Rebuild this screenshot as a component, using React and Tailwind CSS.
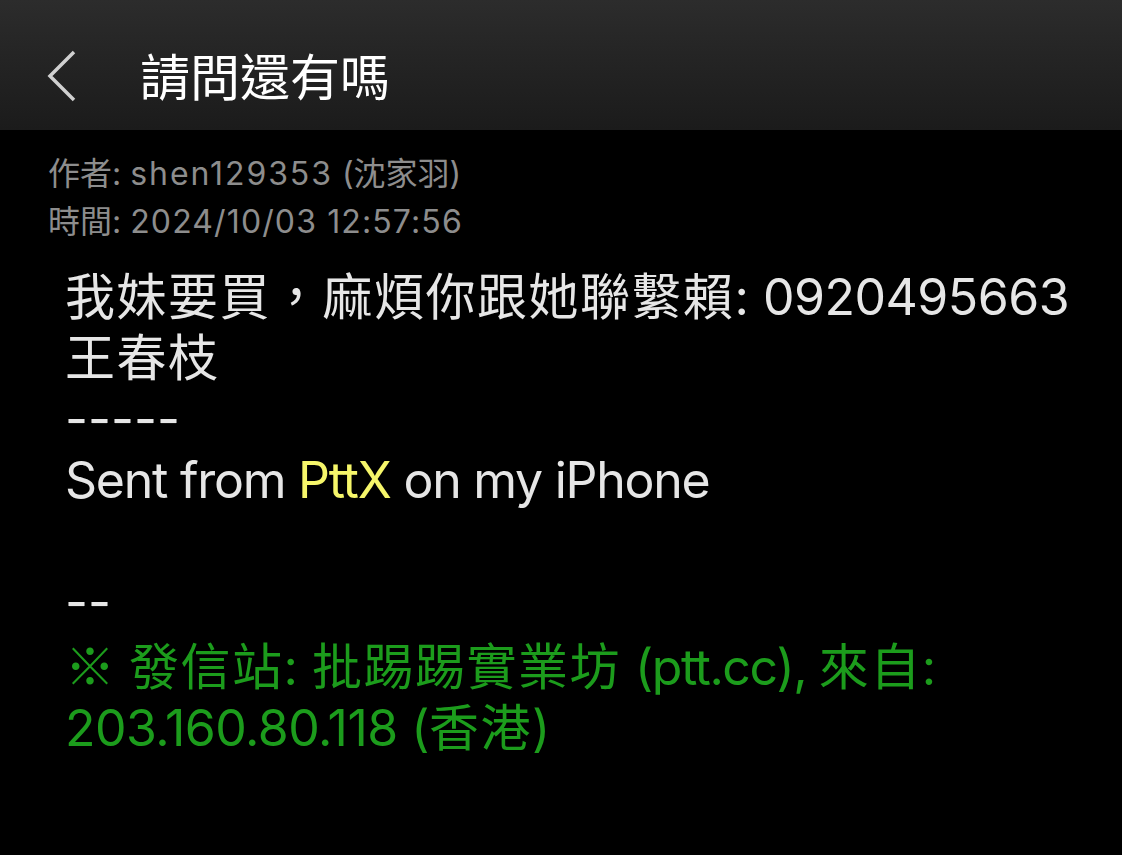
const font = { fontFamily: 'Inter, "Noto Sans CJK TC", sans-serif' };
const cjk = { fontFamily: '"Noto Sans CJK TC", sans-serif' };

function BackIcon() {
    return (
        <svg width="36" height="56" viewBox="0 0 36 56" className="shrink-0">
            <path d="M30 4 L6 28 L30 52" fill="none" stroke="#d0d0d0" strokeWidth="3.5" />
        </svg>
    );
}

// CJK runs are set a touch wider than the Latin ones, as in the app
const C = ({ children }) => <span className="tracking-[1.5px]">{children}</span>;

export default function App() {
    return (
        <div className="w-[1122px] h-[855px] bg-black overflow-hidden" style={font}>
            {/* Header */}
            <header className="h-[130px] flex items-center pl-[44px] pt-[22px] bg-gradient-to-b from-[#2c2c2c] to-[#1b1b1b]">
                <BackIcon />
                <h1 className="ml-[60px] text-[50px] leading-none text-white font-normal pt-1">請問還有嗎</h1>
            </header>

            {/* Meta */}
            <div className="pl-[48px] pt-[20px] text-[32px] leading-[48px] text-[#8d8d8d]">
                <p>
                    作者: <span className="tracking-[0.06em]">shen129353</span> (沈家羽)
                </p>
                <p>
                    時間: <span className="tracking-[0.035em]">2024/10/03 12:57:56</span>
                </p>
            </div>

            {/* Body */}
            <div className="pl-[65px] pt-[21px] text-[50px] leading-[61px] text-[#e6e6e6]">
                <p>
                    <C>我妹要買，麻煩你跟她聯繫賴</C>: <span className="tracking-[-0.01em]">0920495663</span>
                </p>
                <p>
                    <C>王春枝</C>
                </p>
                <p>-----</p>
                <p className="tracking-[-0.025em]">
                    Sent from <span className="text-[#f6f66a]">PttX</span> on my iPhone
                </p>
                <p>&nbsp;</p>
                <p>--</p>
                <div className="text-[#1c9c1c]">
                    <p>
                        <span style={cjk}>※</span> <C>發信站</C>: <C>批踢踢實業坊</C>{' '}
                        <span className="tracking-[-0.03em]">(ptt.cc), </span>
                        <C>來自</C>:
                    </p>
                    <p>
                        <span className="tracking-[-0.01em]">203.160.80.118 (</span>
                        <C>香港</C>)
                    </p>
                </div>
            </div>
        </div>
    );
}
